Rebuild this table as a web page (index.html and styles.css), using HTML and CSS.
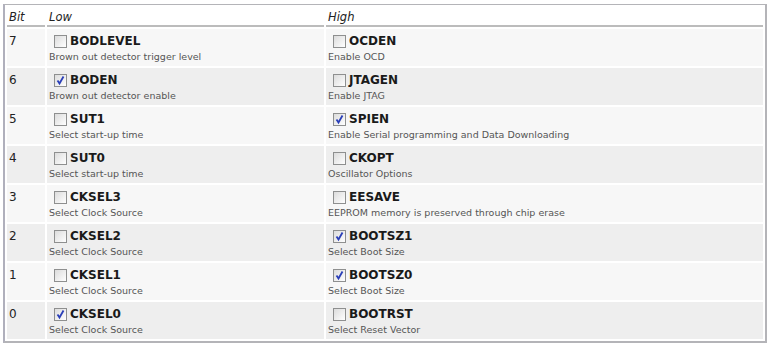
FILE: index.html
```html
<!DOCTYPE html>
<html>
<head>
<meta charset="utf-8">
<link rel="stylesheet" href="styles.css">
</head>
<body>
<div class="box">
<table class="fuses">
<thead>
<tr><th class="bit">Bit</th><th class="low">Low</th><th class="high">High</th></tr>
</thead>
<tbody>
<tr class="odd"><td class="num">7</td>
<td><div class="name"><span class="cb"></span>BODLEVEL</div><div class="desc">Brown out detector trigger level</div></td>
<td><div class="name"><span class="cb"></span>OCDEN</div><div class="desc">Enable OCD</div></td></tr>
<tr class="even"><td class="num">6</td>
<td><div class="name"><span class="cb on"><svg viewBox="0 0 13 13"><path d="M3.5 6.5 L5.5 9.5 L9.5 2.5" /></svg></span>BODEN</div><div class="desc">Brown out detector enable</div></td>
<td><div class="name"><span class="cb"></span>JTAGEN</div><div class="desc">Enable JTAG</div></td></tr>
<tr class="odd"><td class="num">5</td>
<td><div class="name"><span class="cb"></span>SUT1</div><div class="desc">Select start-up time</div></td>
<td><div class="name"><span class="cb on"><svg viewBox="0 0 13 13"><path d="M3.5 6.5 L5.5 9.5 L9.5 2.5" /></svg></span>SPIEN</div><div class="desc">Enable Serial programming and Data Downloading</div></td></tr>
<tr class="even"><td class="num">4</td>
<td><div class="name"><span class="cb"></span>SUT0</div><div class="desc">Select start-up time</div></td>
<td><div class="name"><span class="cb"></span>CKOPT</div><div class="desc">Oscillator Options</div></td></tr>
<tr class="odd"><td class="num">3</td>
<td><div class="name"><span class="cb"></span>CKSEL3</div><div class="desc">Select Clock Source</div></td>
<td><div class="name"><span class="cb"></span>EESAVE</div><div class="desc">EEPROM memory is preserved through chip erase</div></td></tr>
<tr class="even"><td class="num">2</td>
<td><div class="name"><span class="cb"></span>CKSEL2</div><div class="desc">Select Clock Source</div></td>
<td><div class="name"><span class="cb on"><svg viewBox="0 0 13 13"><path d="M3.5 6.5 L5.5 9.5 L9.5 2.5" /></svg></span>BOOTSZ1</div><div class="desc">Select Boot Size</div></td></tr>
<tr class="odd"><td class="num">1</td>
<td><div class="name"><span class="cb"></span>CKSEL1</div><div class="desc">Select Clock Source</div></td>
<td><div class="name"><span class="cb on"><svg viewBox="0 0 13 13"><path d="M3.5 6.5 L5.5 9.5 L9.5 2.5" /></svg></span>BOOTSZ0</div><div class="desc">Select Boot Size</div></td></tr>
<tr class="even"><td class="num">0</td>
<td><div class="name"><span class="cb on"><svg viewBox="0 0 13 13"><path d="M3.5 6.5 L5.5 9.5 L9.5 2.5" /></svg></span>CKSEL0</div><div class="desc">Select Clock Source</div></td>
<td><div class="name"><span class="cb"></span>BOOTRST</div><div class="desc">Select Reset Vector</div></td></tr>
</tbody>
</table>
</div>
</body>
</html>
```

FILE: styles.css
```css
html, body {
  margin: 0;
  padding: 0;
  background: #ffffff;
}
body {
  font-family: "DejaVu Sans", Verdana, sans-serif;
  color: #222;
}
.box {
  margin: 4px 4px 1px 3px;
  border: 1px solid #b4b4b8;
  border-left: 2px solid #b0b0bc;
  border-right: 2px solid #b4b4b8;
  border-bottom: 2px solid #b4b4b8;
}
.fuses {
  width: 100%;
  table-layout: fixed;
  border-collapse: separate;
  border-spacing: 2px;
}
.fuses th {
  box-sizing: border-box;
  font-weight: normal;
  font-style: italic;
  font-size: 11.5px;
  line-height: 16px;
  text-align: left;
  padding: 2px 2px 0 2px;
  border-bottom: 2px solid #bcbcbc;
  color: #222;
  height: 20px;
}
.fuses th.bit { width: 38px; }
.fuses th.low { width: 277px; }
.fuses td {
  vertical-align: top;
  padding: 4px 2px 0 2px;
  height: 33px;
}
.odd td { background: #f7f7f7; }
.even td { background: #eeeeee; }
.num {
  font-size: 12px;
  line-height: 16px;
  color: #222;
}
.name {
  display: flex;
  align-items: center;
  font-weight: bold;
  font-size: 12px;
  line-height: 16px;
  color: #1a1a1a;
  padding-left: 5px;
}
.cb {
  box-sizing: border-box;
  width: 13px;
  height: 13px;
  border: 1px solid #8e8f8f;
  background: linear-gradient(135deg, #dcdcdc 0%, #f4f4f4 70%, #ffffff 100%);
  margin-right: 3px;
  display: inline-block;
  position: relative;
}
.cb svg {
  position: absolute;
  left: -1px;
  top: -1px;
  width: 13px;
  height: 13px;
}
.cb svg path {
  fill: none;
  stroke: #2a3fb8;
  stroke-width: 1.8;
}
.desc {
  font-size: 9.5px;
  line-height: 12px;
  color: #555;
  padding-top: 2px;
}
```
